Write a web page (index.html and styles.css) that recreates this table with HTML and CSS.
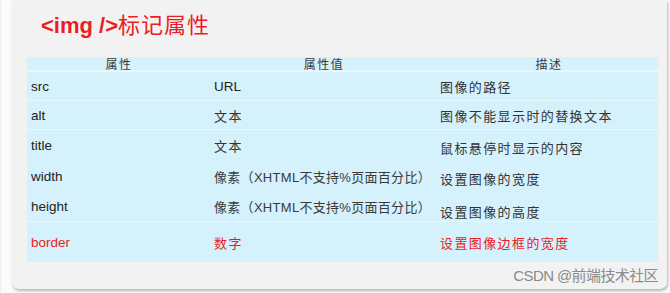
FILE: index.html
```html
<!DOCTYPE html>
<html lang="zh-CN">
<head>
<meta charset="utf-8">
<link rel="stylesheet" href="styles.css">
</head>
<body>
<div class="page">
  <div class="card">
    <h1 class="title"><span class="tag">&lt;img /&gt;</span><span class="cjk-title">标记属性</span></h1>
    <div class="table">
      <div class="row head">
        <div class="cell c1">属性</div>
        <div class="cell c2">属性值</div>
        <div class="cell c3">描述</div>
      </div>
      <div class="row r-src">
        <div class="cell c1 en">src</div>
        <div class="cell c2 en">URL</div>
        <div class="cell c3 zh">图像的路径</div>
      </div>
      <div class="row r-alt">
        <div class="cell c1 en">alt</div>
        <div class="cell c2 zh">文本</div>
        <div class="cell c3 zh">图像不能显示时的替换文本</div>
      </div>
      <div class="row r-title nosep">
        <div class="cell c1 en">title</div>
        <div class="cell c2 zh">文本</div>
        <div class="cell c3 zh low">鼠标悬停时显示的内容</div>
      </div>
      <div class="row r-width nosep">
        <div class="cell c1 en">width</div>
        <div class="cell c2 zh mix">像素（XHTML不支持%页面百分比）</div>
        <div class="cell c3 zh low">设置图像的宽度</div>
      </div>
      <div class="row r-height">
        <div class="cell c1 en">height</div>
        <div class="cell c2 zh mix">像素（XHTML不支持%页面百分比）</div>
        <div class="cell c3 zh lower">设置图像的高度</div>
      </div>
      <div class="row r-border red">
        <div class="cell c1 en">border</div>
        <div class="cell c2 zh">数字</div>
        <div class="cell c3 zh">设置图像边框的宽度</div>
      </div>
    </div>
    <div class="footer"><span class="watermark">CSDN @前端技术社区</span></div>
  </div>
</div>
</body>
</html>
```
FILE: styles.css
```css
html, body {
  margin: 0;
  padding: 0;
  background: #fbfbfb;
}
.page {
  padding-left: 11px;
  height: 293px;
  box-sizing: border-box;
  border-left: 1px solid #f0f0f0;
}
.card {
  width: 655px;
  height: 289px;
  box-sizing: border-box;
  background: #f3f2f2;
  border-radius: 0 0 7px 7px;
  box-shadow: 1px 2px 3px rgba(0, 0, 0, 0.28);
  padding: 8px 9px 0 15px;
  display: flex;
  flex-direction: column;
}
.title {
  margin: 0 0 21px 14px;
  height: 28px;
  line-height: 28px;
  color: #ec1c24;
  font-weight: normal;
  white-space: nowrap;
}
.tag {
  font-family: "Liberation Sans", Arial, sans-serif;
  font-weight: bold;
  font-size: 22px;
}
.cjk-title {
  font-family: "Noto Sans CJK SC", sans-serif;
  font-size: 22px;
  letter-spacing: 1px;
}
.table {
  width: 631px;
  background: #d5f1fc;
  display: flex;
  flex-direction: column;
}
.row {
  display: grid;
  grid-template-columns: 180px 227px 224px;
  height: 29px;
  align-items: center;
  border-bottom: 1px solid #e6f7fd;
  box-sizing: border-box;
}
.row.nosep {
  border-bottom-color: transparent;
}
.row.head {
  height: 15px;
  border-bottom: 2px solid #e6f7fd;
}
.head .cell {
  text-align: center;
  font-family: "Noto Sans CJK SC", sans-serif;
  font-size: 12px;
  letter-spacing: 1.5px;
  color: #3a3a3a;
  line-height: 13px;
}
.r-title, .r-width { height: 31px; }
.r-height { height: 30px; }
.r-border { height: 40px; border-bottom: none; }
.cell {
  white-space: nowrap;
}
.c1 { padding-left: 4px; }
.c2 { padding-left: 7px; }
.c3 { padding-left: 6px; }
.en {
  font-family: "Liberation Sans", Arial, sans-serif;
  font-size: 13.5px;
  color: #222;
}
.zh {
  font-family: "Noto Sans CJK SC", sans-serif;
  font-size: 13px;
  letter-spacing: 1.4px;
  color: #333;
}
.zh.mix {
  font-family: "Liberation Sans", "Noto Sans CJK SC", sans-serif;
  letter-spacing: 0.3px;
  color: #3a3a3a;
}
.low { padding-top: 5px; }
.lower { padding-top: 9px; }
.red .cell { color: #ec1c24; }
.footer {
  display: flex;
  justify-content: flex-end;
  padding: 4px 0 0 0;
}
.watermark {
  font-family: "Liberation Sans", "Noto Sans CJK SC", sans-serif;
  font-size: 15px;
  letter-spacing: -0.6px;
  color: #8a8a8a;
  line-height: 19px;
}
```
